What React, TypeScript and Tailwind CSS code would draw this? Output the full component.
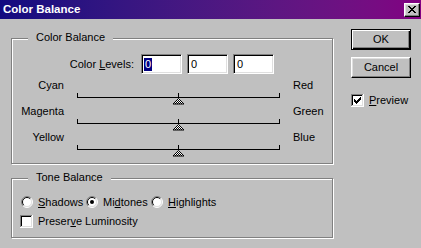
import React from 'react';

function Radio({ checked }: { checked?: boolean }) {
  return (
    <svg width="12" height="12" viewBox="0 0 12 12" className="shrink-0">
      <circle cx="6" cy="6" r="5" fill="#fff" />
      <path d="M2.1 9.9 A5.5 5.5 0 0 1 9.9 2.1" fill="none" stroke="#808080" strokeWidth="1" />
      <path d="M9.9 2.1 A5.5 5.5 0 0 1 2.1 9.9" fill="none" stroke="#fff" strokeWidth="1" />
      <path d="M2.8 9.2 A4.5 4.5 0 0 1 9.2 2.8" fill="none" stroke="#000" strokeWidth="1" />
      <path d="M9.2 2.8 A4.5 4.5 0 0 1 2.8 9.2" fill="none" stroke="#dfdfdf" strokeWidth="1" />
      {checked && <circle cx="6" cy="6" r="2" fill="#000" />}
    </svg>
  );
}

function Check({ checked }: { checked?: boolean }) {
  return (
    <svg width="13" height="13" viewBox="0 0 13 13" className="shrink-0" shapeRendering="crispEdges">
      <rect x="0" y="0" width="13" height="13" fill="#fff" />
      <path d="M0 0.5H12.5M0.5 0V12.5" stroke="#808080" />
      <path d="M1 1.5H11.5M1.5 1V11.5" stroke="#000" />
      <path d="M0 12.5H13M12.5 0V13" stroke="#fff" />
      <path d="M1 11.5H12M11.5 1V12" stroke="#dfdfdf" />
      {checked && (
        <path
          d="M9 3h1v1H9zM8 4h2v1H8zM3 5h1v1H3zM7 5h3v1H7zM3 6h2v1H3zM6 6h3v1H6zM3 7h5v1H3zM4 8h3v1H4zM5 9h1v1H5z"
          fill="#000"
        />
      )}
    </svg>
  );
}

function Slider() {
  return (
    <svg width="204" height="26" viewBox="0 0 204 26" className="shrink-0" shapeRendering="crispEdges">
      <defs>
        <pattern id="dith" width="2" height="2" patternUnits="userSpaceOnUse">
          <rect width="2" height="2" fill="#fff" />
          <rect width="1" height="1" fill="#000" />
          <rect x="1" y="1" width="1" height="1" fill="#000" />
        </pattern>
      </defs>
      <path d="M0.5 14V19M0.5 18.5H203M202.5 14V19M101.5 14V19" stroke="#000" fill="none" />
      <path d="M101.5 19.5L107 25H96Z" fill="url(#dith)" stroke="#000" strokeWidth="1" shapeRendering="auto" />
    </svg>
  );
}

function Field({ selected }: { selected?: boolean }) {
  return (
    <div className="flex h-[20px] w-[41px] items-center border border-t-[#808080] border-l-[#808080] border-b-white border-r-white bg-white pl-[2px] shadow-[inset_1px_1px_0_#000,inset_-1px_-1px_0_#dfdfdf]">
      {selected ? <span className="bg-[#000080] px-[1px] leading-[13px] text-white">0</span> : <span className="pl-[1px] leading-[13px]">0</span>}
    </div>
  );
}

const rows = [
  ['Cyan', 'Red'],
  ['Magenta', 'Green'],
  ['Yellow', 'Blue'],
];

export default function App() {
  return (
    <div className="h-[248px] w-[421px] overflow-hidden bg-[#c0c0c0] font-['Liberation_Sans',Arial,sans-serif] text-[11px] leading-[13px] text-black">
      <div className="flex h-[19px] items-center bg-linear-to-r from-[#120a80] to-[#820082] pl-[3px]">
        <span className="text-[11.5px] font-bold text-white">Color Balance</span>
        <div className="mr-[1px] ml-auto flex h-[14px] w-[16px] items-center justify-center border border-t-white border-l-white border-r-black border-b-black bg-[#c0c0c0] shadow-[inset_-1px_-1px_0_#808080,inset_1px_1px_0_#dfdfdf]">
          <svg width="8" height="7" viewBox="0 0 8 7" shapeRendering="crispEdges">
            <path d="M0 0h2v1h1v1h2V1h1V0h2v1H7v1H6v1H5v1h1v1h1v1h1v1H6V6H5V5H3v1H2v1H0V6h1V5h1V4h1V3H2V2H1V1H0z" fill="#000" />
          </svg>
        </div>
      </div>

      <div className="flex pl-[11px]">
        <div className="flex flex-col gap-[14px] pt-[19px]">
          <div className="relative h-[126px] w-[322px] border border-[#808080] shadow-[inset_1px_1px_0_#fff,1px_1px_0_#fff]">
            <span className="absolute top-[-8px] left-[16px] bg-[#c0c0c0] px-[8px]">Color Balance</span>
            <div className="mt-[15px] flex h-[20px] items-center">
              <div className="w-[129px] pr-[7px] text-right">
                Color <u>L</u>evels:
              </div>
              <div className="flex gap-[5px]">
                <Field selected />
                <Field />
                <Field />
              </div>
            </div>
            <div className="mt-[5px] flex flex-col">
              {rows.map(([l, r]) => (
                <div key={l} className="flex h-[26px] items-start">
                  <div className="w-[52px] text-right">{l}</div>
                  <div className="ml-[13px]">
                    <Slider />
                  </div>
                  <div className="ml-[12px]">{r}</div>
                </div>
              ))}
            </div>
          </div>

          <div className="relative h-[60px] w-[322px] border border-[#808080] shadow-[inset_1px_1px_0_#fff,1px_1px_0_#fff]">
            <span className="absolute top-[-8px] left-[16px] bg-[#c0c0c0] px-[8px]">Tone Balance</span>
            <div className="mt-[17px] flex h-[12px] items-center pl-[9px]">
              <div className="flex w-[65px] items-center gap-[5px]">
                <Radio />
                <span><u>S</u>hadows</span>
              </div>
              <div className="flex w-[65px] items-center gap-[5px]">
                <Radio checked />
                <span>Mi<u>d</u>tones</span>
              </div>
              <div className="flex items-center gap-[5px]">
                <Radio />
                <span><u>H</u>ighlights</span>
              </div>
            </div>
            <div className="mt-[7px] flex h-[13px] items-center gap-[5px] pl-[8px]">
              <Check />
              <span>Preser<u>v</u>e Luminosity</span>
            </div>
          </div>
        </div>

        <div className="ml-[18px] flex flex-col pt-[10px]">
          <button className="flex h-[21px] w-[60px] items-center justify-center border border-black bg-[#c0c0c0] shadow-[inset_1px_1px_0_#fff,inset_-1px_-1px_0_#000,inset_-2px_-2px_0_#808080]">
            OK
          </button>
          <button className="mt-[7px] flex h-[21px] w-[60px] items-center justify-center border border-t-white border-l-white border-r-black border-b-black bg-[#c0c0c0] shadow-[inset_-1px_-1px_0_#808080,inset_1px_1px_0_#dfdfdf]">
            Cancel
          </button>
          <div className="mt-[16px] flex h-[13px] items-center gap-[5px]">
            <Check checked />
            <span><u>P</u>review</span>
          </div>
        </div>
      </div>
    </div>
  );
}
